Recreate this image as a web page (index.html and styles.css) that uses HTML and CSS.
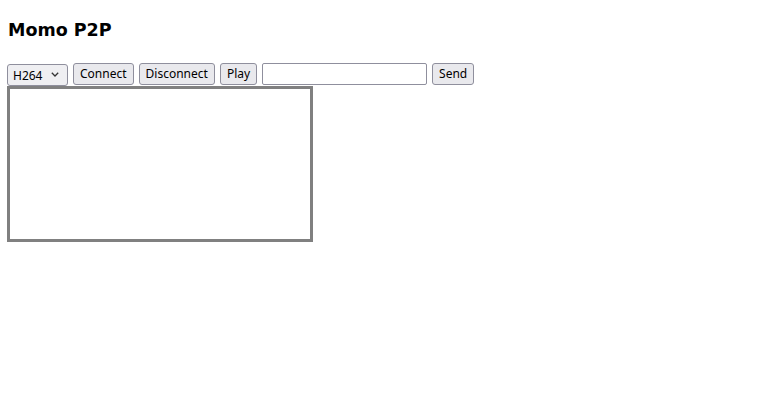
FILE: index.html
```html
<!DOCTYPE html>
<html>
<head>
    <title>Momo P2P</title>
    <link rel="stylesheet" href="styles.css">
</head>
<body>
    <h2 class="title">Momo P2P</h2>
    <div class="controls">
        <span class="codec-wrap">
            <select class="codec">
                <option>H264</option>
                <option>VP8</option>
                <option>VP9</option>
            </select>
            <svg class="chevron" width="8" height="5" viewBox="0 0 8 5">
                <path d="M0.8 0.8 L4 4 L7.2 0.8" fill="none" stroke="#333" stroke-width="1.3"/>
            </svg>
        </span>
        <button class="button">Connect</button>
        <button class="button">Disconnect</button>
        <button class="button">Play</button>
        <input type="text" class="message">
        <button class="button">Send</button>
    </div>
    <div class="video"></div>
</body>
</html>
```

FILE: styles.css
```css
body {
    margin: 8px 7px;
    font-family: "Noto Sans", sans-serif;
    background-color: white;
}
.title {
    font-family: "DejaVu Sans", sans-serif;
    font-size: 17.5px;
    font-weight: bold;
    margin: 12px 1px 22px;
    color: #000;
}
.controls {
    display: flex;
    align-items: center;
    gap: 5px;
    height: 23px;
    margin-bottom: 1px;
}
.button, .codec {
    font-family: "Noto Sans", sans-serif;
    font-size: 12px;
    height: 22px;
    padding: 0 6px;
    border: 1px solid #8f8f9d;
    border-radius: 3px;
    background-color: #e9e9ed;
    color: #000;
}
.codec-wrap {
    position: relative;
    display: inline-block;
    height: 22px;
}
.codec {
    appearance: none;
    -webkit-appearance: none;
    width: 61px;
    padding: 0 5px;
    background-color: #efeff2;
}
.chevron {
    position: absolute;
    right: 9px;
    top: 9px;
    pointer-events: none;
}
.message {
    width: 165px;
    height: 22px;
    box-sizing: border-box;
    border: 1px solid #8f8f9d;
    border-radius: 2px;
    padding: 1px 3px;
}
.video {
    width: 300px;
    height: 150px;
    border: 3px solid #808080;
}
```
